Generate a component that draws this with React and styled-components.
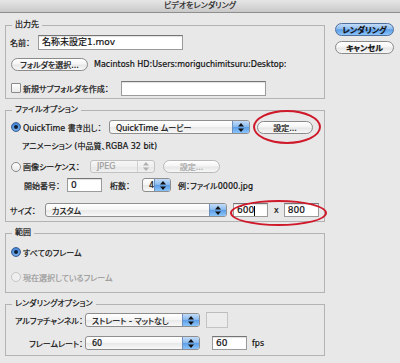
import React from 'react';
import styled, { createGlobalStyle, css } from 'styled-components';

const GlobalStyle = createGlobalStyle`
  html, body {
    margin: 0;
    padding: 0;
    background: #e8e8e8;
  }
  body {
    font-family: "DejaVu Sans", "Noto Sans CJK JP", sans-serif;
    font-size: 8px;
    color: #111;
    font-feature-settings: "palt";
    -webkit-text-stroke: 0.2px currentColor;
  }
`;

const Window = styled.div`
  width: 400px;
  height: 363px;
  overflow: hidden;
  background: #e8e8e8;
`;

const TitleBar = styled.div`
  height: 12px;
  line-height: 12px;
  text-align: center;
  font-size: 8px;
  color: #222;
  border-bottom: 1px solid #8e8e8e;
  background: linear-gradient(#e6e6e6, #c9c9c9);
`;

const Body = styled.div`
  display: flex;
  padding: 7px 0 0 5px;
`;

const LeftCol = styled.div`
  width: 320px;
  display: flex;
  flex-direction: column;
`;

const RightCol = styled.div`
  width: 59px;
  margin-left: 10px;
  margin-top: 3px;
  display: flex;
  flex-direction: column;
  gap: 5px;
`;

const Group = styled.fieldset`
  margin: ${p => p.mt || 0}px 0 0 0;
  padding: 0 4px ${p => p.pb || 0}px 4px;
  border: 1px solid #b3b3b3;
  min-width: 0;
  box-sizing: border-box;
  width: 320px;
`;

const Legend = styled.legend`
  font-size: 8px;
  line-height: 10px;
  padding: 0 3px;
  margin-left: 2px;
`;

const Row = styled.div`
  position: relative;
  display: flex;
  align-items: center;
  height: ${p => p.h}px;
  margin-top: ${p => p.mt}px;
  padding-left: ${p => p.pl || 0}px;
  white-space: nowrap;
`;

const Label = styled.span`
  display: inline-flex;
  justify-content: ${p => (p.right ? 'flex-end' : 'flex-start')};
  flex: none;
  width: ${p => (p.w ? `${p.w}px` : 'auto')};
  margin-left: ${p => p.ml || 0}px;
  color: ${p => (p.dim ? '#9a9a9a' : '#111')};
`;

const Input = styled.div`
  flex: none;
  box-sizing: border-box;
  width: ${p => p.w}px;
  height: ${p => p.h || 14}px;
  margin-left: ${p => p.ml || 0}px;
  padding-left: 3px;
  line-height: ${p => (p.h || 14) - 2}px;
  font-size: 9px;
  background: ${p => (p.off ? '#ececec' : '#fff')};
  border: 1px solid ${p => (p.off ? '#c4c4c4' : '#9b9b9b')};
  border-top-color: ${p => (p.off ? '#bcbcbc' : '#747474')};
  box-shadow: ${p => (p.off ? 'none' : 'inset 0 1px 1px rgba(0,0,0,0.12)')};
`;

const Caret = styled.span`
  display: inline-block;
  width: 1px;
  height: 10px;
  background: #000;
  vertical-align: middle;
`;

const aquaBlue = css`
  background: linear-gradient(#c3dbf7 0%, #8dbdf1 45%, #5e9ee6 52%, #8ac4fa 100%);
`;

const Button = styled.div`
  flex: none;
  box-sizing: border-box;
  width: ${p => p.w}px;
  height: 13px;
  margin-left: ${p => p.ml || 0}px;
  border-radius: 7px;
  border: 1px solid ${p => (p.def ? '#4f6f9c' : p.off ? '#b9b9b9' : '#8a8a8a')};
  display: flex;
  align-items: center;
  justify-content: center;
  font-size: 8px;
  font-weight: ${p => (p.bold ? 700 : 400)};
  color: ${p => (p.off ? '#a5a5a5' : '#111')};
  ${p =>
    p.def
      ? aquaBlue
      : css`
          background: linear-gradient(#ffffff 0%, #f4f4f4 48%, #e6e6e6 52%, #f7f7f7 100%);
        `}
`;

const Popup = styled.div`
  flex: none;
  display: flex;
  box-sizing: border-box;
  width: ${p => p.w}px;
  height: ${p => p.h || 14}px;
  margin-left: ${p => p.ml || 0}px;
  border: 1px solid ${p => (p.off ? '#c2c2c2' : '#8e8e8e')};
  border-radius: 3px;
  overflow: hidden;
  background: ${p =>
    p.off
      ? 'linear-gradient(#f6f6f6, #efefef 50%, #e6e6e6 51%, #f0f0f0)'
      : 'linear-gradient(#ffffff, #f5f5f5 50%, #e8e8e8 51%, #f8f8f8)'};
`;

const PopupText = styled.span`
  flex: 1;
  padding-left: 6px;
  display: flex;
  align-items: center;
  font-size: 8px;
  color: ${p => (p.off ? '#9c9c9c' : '#111')};
`;

const PopupArrow = styled.span`
  flex: none;
  width: 16px;
  display: flex;
  align-items: center;
  justify-content: center;
  border-left: 1px solid ${p => (p.off ? '#d0d0d0' : '#6d8fbd')};
  ${p =>
    p.off
      ? css`
          background: transparent;
        `
      : aquaBlue}
`;

const Radio = styled.span`
  flex: none;
  box-sizing: border-box;
  width: 10px;
  height: 10px;
  margin-left: 1px;
  border-radius: 50%;
  display: flex;
  align-items: center;
  justify-content: center;
  border: 1px solid ${p => (p.on ? '#3f5f8f' : p.off ? '#c6c6c6' : '#8a8a8a')};
  background: ${p =>
    p.on
      ? 'radial-gradient(circle at 50% 65%, #8fc3f7, #3f83d6 70%)'
      : p.off
      ? '#efefef'
      : 'linear-gradient(#fdfdfd, #e9e9e9)'};
  &::after {
    content: '';
    display: ${p => (p.on ? 'block' : 'none')};
    width: 4px;
    height: 4px;
    border-radius: 50%;
    background: #0d1d33;
  }
`;

const Check = styled.span`
  flex: none;
  box-sizing: border-box;
  width: 10px;
  height: 10px;
  margin-left: 1px;
  border: 1px solid #8a8a8a;
  border-radius: 1px;
  background: linear-gradient(#ffffff, #ebebeb);
`;

const Text = styled.span`
  margin-left: ${p => p.ml || 0}px;
  color: ${p => (p.dim ? '#9a9a9a' : '#111')};
`;

const Mark = styled.div`
  position: absolute;
  left: ${p => p.x}px;
  top: ${p => p.y}px;
  width: ${p => p.w}px;
  height: ${p => p.h}px;
  box-sizing: border-box;
  border: 2px solid #cf1a2b;
  border-radius: 50%;
  pointer-events: none;
`;

const Arrows = ({ off }) => (
  <svg width="6" height="9" viewBox="0 0 6 9">
    <polygon points="0,3.5 3,0 6,3.5" fill={off ? '#b0b0b0' : '#111'} />
    <polygon points="0,5.5 6,5.5 3,9" fill={off ? '#b0b0b0' : '#111'} />
  </svg>
);

const Select = ({ w, h, ml, off, children }) => (
  <Popup w={w} h={h} ml={ml} off={off}>
    <PopupText off={off}>{children}</PopupText>
    <PopupArrow off={off}>
      <Arrows off={off} />
    </PopupArrow>
  </Popup>
);

export default function App() {
  return (
    <Window>
      <GlobalStyle />
      <TitleBar>ビデオをレンダリング</TitleBar>
      <Body>
        <LeftCol>
          <Group pb={2}>
            <Legend>出力先</Legend>
            <Row h={16} mt={4}>
              <Label w={28}>名前：</Label>
              <Input w={145} h={15}>名称未設定1.mov</Input>
            </Row>
            <Row h={16} mt={6}>
              <Button w={77} ml={1}>フォルダを選択...</Button>
              <Text ml={6}>Macintosh HD:Users:moriguchimitsuru:Desktop:</Text>
            </Row>
            <Row h={16} mt={8}>
              <Check />
              <Label ml={2} w={98}>新規サブフォルダを作成：</Label>
              <Input w={145} h={15} />
            </Row>
          </Group>

          <Group mt={6} pb={4}>
            <Legend>ファイルオプション</Legend>
            <Row h={14} mt={5}>
              <Radio on />
              <Label ml={2} w={86}>QuickTime 書き出し：</Label>
              <Select w={141}>QuickTime ムービー</Select>
              <Button w={56} ml={7}>設定...</Button>
              <Mark x={243} y={-10} w={68} h={34} />
            </Row>
            <Row h={12} mt={5} pl={12}>
              <Text>アニメーション (中品質、RGBA 32 bit)</Text>
            </Row>
            <Row h={13} mt={9}>
              <Radio />
              <Label ml={2} w={67}>画像シーケンス：</Label>
              <Select w={65} h={13} off>JPEG</Select>
              <Button w={57} ml={8} off>設定...</Button>
            </Row>
            <Row h={14} mt={5} pl={14}>
              <Label w={43}>開始番号：</Label>
              <Input w={35}>0</Input>
              <Label ml={8} w={32}>桁数：</Label>
              <Select w={29}>4</Select>
              <Text ml={7}>例：ファイル0000.jpg</Text>
            </Row>
            <Row h={14} mt={11}>
              <Label w={35}>サイズ：</Label>
              <Select w={182}>カスタム</Select>
              <Input w={35} ml={6}>600<Caret /></Input>
              <Text ml={6}>x</Text>
              <Input w={35} ml={5}>800</Input>
              <Mark x={220} y={-3} w={97} h={26} />
            </Row>
          </Group>

          <Group mt={6} pb={9}>
            <Legend>範囲</Legend>
            <Row h={12} mt={8}>
              <Radio on />
              <Text ml={2}>すべてのフレーム</Text>
            </Row>
            <Row h={12} mt={13}>
              <Radio off />
              <Text ml={2} dim>現在選択しているフレーム</Text>
            </Row>
          </Group>

          <Group mt={6} pb={5}>
            <Legend>レンダリングオプション</Legend>
            <Row h={16} mt={3}>
              <Label right w={73}>アルファチャンネル：</Label>
              <Select w={115} ml={2}>ストレート - マットなし</Select>
              <Input w={22} h={16} ml={6} off />
            </Row>
            <Row h={14} mt={8}>
              <Label right w={73}>フレームレート：</Label>
              <Select w={115} ml={2}>60</Select>
              <Input w={35} ml={12}>60</Input>
              <Text ml={5}>fps</Text>
            </Row>
          </Group>
        </LeftCol>

        <RightCol>
          <Button w={59} def bold>レンダリング</Button>
          <Button w={59} bold>キャンセル</Button>
        </RightCol>
      </Body>
    </Window>
  );
}
